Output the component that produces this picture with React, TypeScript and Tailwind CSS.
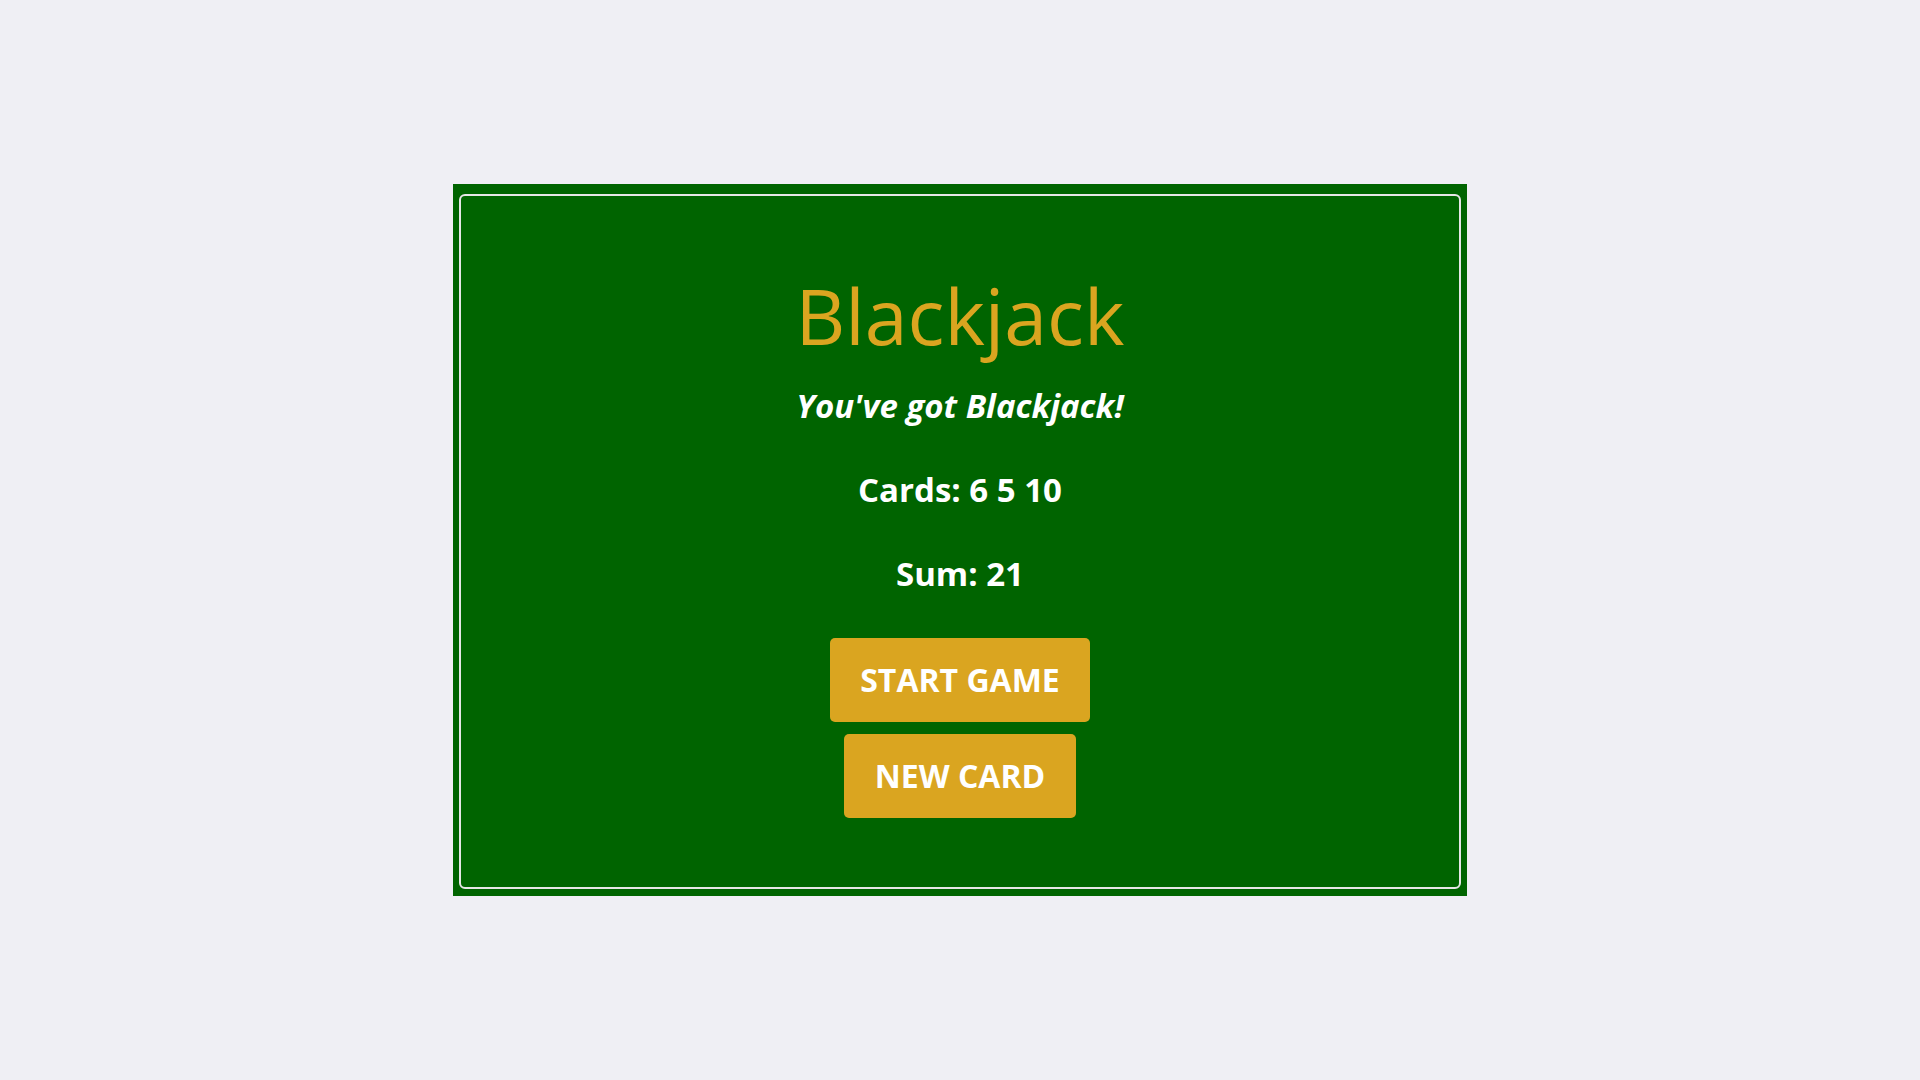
import React from "react";

export default function App() {
  return (
    <div className="min-h-screen w-full bg-[#efeff4] flex items-center justify-center" style={{ fontFamily: '"Open Sans", "Noto Sans", sans-serif' }}>
      <div className="w-[1014px] h-[712px] bg-[#006400] pt-[10px] px-[6px] pb-[7px] flex">
        <div className="flex-1 border-2 border-[#e6e6e6] rounded-[6px] flex flex-col items-center">
          <h1 className="mt-[70px] text-[77px] leading-[100px] font-normal text-[#daa520]">Blackjack</h1>
          <p className="mt-[20px] text-[33px] leading-[40px] font-bold italic text-white">You've got Blackjack!</p>
          <p className="mt-[44px] text-[33px] leading-[40px] font-bold text-white">Cards: 6 5 10</p>
          <p className="mt-[44px] text-[33px] leading-[40px] font-bold text-white">Sum: 21</p>
          <button className="mt-[44px] h-[84px] px-[30px] bg-[#daa520] rounded-[5px] text-[32px] font-bold text-white">START GAME</button>
          <button className="mt-[12px] h-[84px] px-[31px] bg-[#daa520] rounded-[5px] text-[32px] font-bold text-white">NEW CARD</button>
        </div>
      </div>
    </div>
  );
}
